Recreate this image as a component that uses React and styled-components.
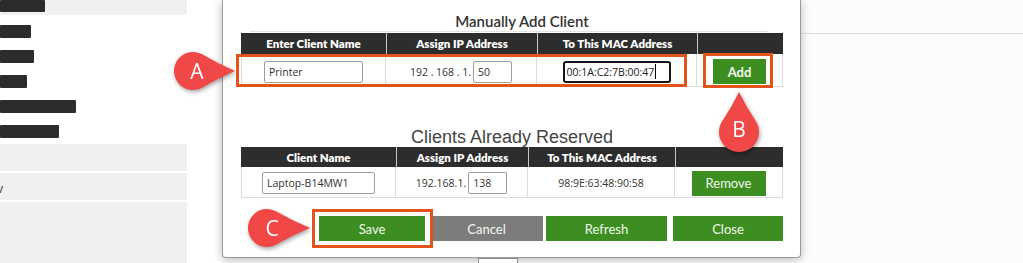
import React from "react";
import styled, { createGlobalStyle } from "styled-components";

const Global = createGlobalStyle`
  html, body { margin: 0; padding: 0; background: #fff; }
  body { font-family: "Open Sans", sans-serif; color: #333; }
`;

const Stage = styled.div`
  position: relative;
  width: 1023px;
  height: 263px;
  overflow: hidden;
  display: flex;
  background: #fff;
`;

/* ---------- sidebar ---------- */
const Sidebar = styled.aside`
  width: 187px;
  flex: none;
  display: flex;
  flex-direction: column;
`;
const SideTop = styled.div`
  height: 15px;
  background: #f0f0f0;
`;
const Redact = styled.div`
  width: ${(p) => p.$w}px;
  height: ${(p) => p.$h || 13}px;
  background: #2c2c2c;
  border-radius: 1px;
`;
const SideList = styled.div`
  display: flex;
  flex-direction: column;
  gap: 12px;
  padding: 10px 0 6px;
`;
const SideRows = styled.div`
  flex: 1;
  display: flex;
  flex-direction: column;
  gap: 2px;
`;
const SideRow = styled.div`
  height: ${(p) => (p.$h ? `${p.$h}px` : "auto")};
  flex: ${(p) => (p.$h ? "none" : 1)};
  background: #f0f0f0;
  display: flex;
  align-items: center;
  font-family: "Open Sans", sans-serif;
  font-size: 12px;
  color: #333;
  overflow: hidden;
`;
const CutText = styled.span`
  margin-left: -3px;
  margin-top: 3px;
`;

const Gutter = styled.div`
  width: 35px;
  flex: none;
`;

/* ---------- modal ---------- */
const ModalCol = styled.div`
  width: 579px;
  flex: none;
  display: flex;
  flex-direction: column;
  position: relative;
  z-index: 1;
`;
const Modal = styled.section`
  box-sizing: border-box;
  height: 258px;
  flex: none;
  background: #fff;
  border: 1px solid #9c9c9c;
  border-top: none;
  border-radius: 0 0 4px 4px;
  box-shadow: 0 2px 10px rgba(0, 0, 0, 0.28);
  padding: 0 17px 0 18px;
  display: flex;
  flex-direction: column;
`;
const SectionTitle = styled.h2`
  margin: 0;
  padding: 12px 0 0 20px;
  height: 30px;
  box-sizing: border-box;
  line-height: 18px;
  text-align: center;
  font-family: Lato, sans-serif;
  font-weight: 600;
  font-size: 15px;
  color: #333;
`;
const Rule = styled.div`
  height: 1px;
  background: #e4e4e4;
  margin: 1px 15px 1px 9px;
`;
const BigTitle = styled.h2`
  margin: 40px 0 0;
  height: 20px;
  line-height: 20px;
  text-align: center;
  font-family: "Liberation Sans", Arial, sans-serif;
  font-weight: 400;
  font-size: 18px;
  color: #444;
`;
const Grid = styled.div`
  display: grid;
  grid-template-columns: ${(p) => p.$cols};
`;
const Head = styled.div`
  height: ${(p) => p.$h}px;
  background: #2d2d2d;
  color: #fff;
  font-family: Lato, sans-serif;
  font-weight: 800;
  font-size: 11.5px;
  display: flex;
  align-items: center;
  justify-content: center;
  & + & {
    border-left: 1px solid #c9c9c9;
  }
`;
const Cell = styled.div`
  box-sizing: border-box;
  height: ${(p) => p.$h}px;
  padding-top: ${(p) => p.$pt}px;
  border-bottom: 1px solid #dcdcdc;
  border-right: 1px solid #dcdcdc;
  border-left: ${(p) => (p.$first ? "1px solid #dcdcdc" : "none")};
  display: flex;
  align-items: center;
  justify-content: center;
  gap: 2px;
  font-family: "Open Sans", sans-serif;
  font-size: 10.5px;
  color: #333;
`;
const Field = styled.div`
  box-sizing: border-box;
  width: ${(p) => p.$w}px;
  height: 22px;
  border: ${(p) => (p.$focus ? "2px solid #151515" : "1px solid #9d9d9d")};
  border-radius: ${(p) => (p.$focus ? 3 : 2)}px;
  padding: 0 ${(p) => (p.$focus ? 2 : 4)}px;
  display: flex;
  align-items: center;
  font-family: "Open Sans", sans-serif;
  font-size: 10.5px;
  color: ${(p) => (p.$focus ? "#1a1a1a" : "#333")};
  background: #fff;
  white-space: nowrap;
`;
const Caret = styled.span`
  display: inline-block;
  width: 1px;
  height: 15px;
  background: #000;
  margin-left: 1px;
`;
const Btn = styled.button`
  box-sizing: border-box;
  width: ${(p) => p.$w}px;
  height: 25px;
  border: none;
  padding: 0;
  margin: 0;
  background: ${(p) => (p.$gray ? "#7c7c7c" : "#3d8e20")};
  color: #f4f8f2;
  font-family: Lato, sans-serif;
  font-size: 13px;
  font-weight: ${(p) => (p.$bold ? 700 : 400)};
  cursor: pointer;
`;
const ButtonRow = styled.div`
  margin-top: 18px;
  display: flex;
  justify-content: flex-end;
`;
const Spaced = styled.div`
  margin-left: ${(p) => p.$ml}px;
  display: flex;
`;
const Below = styled.div`
  flex: 1;
  display: flex;
  padding-left: 256px;
`;
const Tab = styled.div`
  width: 38px;
  height: 12px;
  border: 1px solid #8a8a8a;
  border-bottom: none;
  background: #fff;
`;

/* ---------- right pane ---------- */
const RightPane = styled.div`
  flex: 1;
  background: #fcfcfc;
`;
const RightBand = styled.div`
  height: 33px;
  border-bottom: 1px solid #e1e1e1;
`;

/* ---------- overlays ---------- */
const Highlight = styled.div`
  position: absolute;
  left: ${(p) => p.$x}px;
  top: ${(p) => p.$y}px;
  width: ${(p) => p.$w}px;
  height: ${(p) => p.$h}px;
  box-sizing: border-box;
  border: 3px solid #e2541b;
  z-index: 5;
  pointer-events: none;
`;
const CalloutSvg = styled.svg`
  position: absolute;
  left: ${(p) => p.$cx - 50}px;
  top: ${(p) => p.$cy - 50}px;
  width: 100px;
  height: 100px;
  overflow: visible;
  z-index: 6;
  filter: drop-shadow(1px 2px 2px rgba(0, 0, 0, 0.35));
`;

function Callout({ cx, cy, r, d, dir, letter, shift }) {
  const th = Math.acos(r / d);
  const c = 50;
  const tx = c + r * Math.cos(th);
  const ty1 = c - r * Math.sin(th);
  const ty2 = c + r * Math.sin(th);
  const tip = c + d;
  const qx = (tx + tip) / 2;
  const path = `M ${tip} ${c} Q ${qx} ${c - r * Math.sin(th) * 0.42} ${tx} ${ty1} A ${r} ${r} 0 1 0 ${tx} ${ty2} Q ${qx} ${c + r * Math.sin(th) * 0.42} ${tip} ${c} Z`;
  const rot = dir === "up" ? -90 : 0;
  const lx = dir === "up" ? c : c + shift;
  const ly = dir === "up" ? c - shift : c;
  return (
    <CalloutSvg $cx={cx} $cy={cy} viewBox="0 0 100 100">
      <path d={path} fill="#f04747" transform={`rotate(${rot} 50 50)`} />
      <text
        x={lx}
        y={ly + 7.5}
        textAnchor="middle"
        fill="#fff"
        fontFamily="'Open Sans', sans-serif"
        fontSize="21"
      >
        {letter}
      </text>
    </CalloutSvg>
  );
}

export default function App() {
  return (
    <>
      <Global />
      <Stage>
        <Sidebar>
          <SideTop>
            <Redact $w={45} $h={12} />
          </SideTop>
          <SideList>
            <Redact $w={31} />
            <Redact $w={34} />
            <Redact $w={27} />
            <Redact $w={76} />
            <Redact $w={59} />
          </SideList>
          <SideRows>
            <SideRow $h={27} />
            <SideRow $h={27}>
              <CutText>v</CutText>
            </SideRow>
            <SideRow />
          </SideRows>
        </Sidebar>
        <Gutter />
        <ModalCol>
          <Modal>
            <SectionTitle>Manually Add Client</SectionTitle>
            <Rule />
            <Grid $cols="145px 151px 160px 1fr">
              <Head $h={21}>Enter Client Name</Head>
              <Head $h={21}>Assign IP Address</Head>
              <Head $h={21}>To This MAC Address</Head>
              <Head $h={21} />
              <Cell $h={33} $pt={3} $first>
                <Field $w={99}>Printer</Field>
              </Cell>
              <Cell $h={33} $pt={3}>
                <span>192 . 168 . 1.</span>
                <Field $w={39}>50</Field>
              </Cell>
              <Cell $h={33} $pt={3}>
                <Field $w={108} $focus>
                  00:1A:C2:7B:00:47
                  <Caret />
                </Field>
              </Cell>
              <Cell $h={33} $pt={3}>
                <Btn $w={53} $bold>
                  Add
                </Btn>
              </Cell>
            </Grid>
            <BigTitle>Clients Already Reserved</BigTitle>
            <Grid $cols="155px 132px 147px 1fr">
              <Head $h={20}>Client Name</Head>
              <Head $h={20}>Assign IP Address</Head>
              <Head $h={20}>To This MAC Address</Head>
              <Head $h={20} />
              <Cell $h={31} $pt={2} $first>
                <Field $w={113}>Laptop-B14MW1</Field>
              </Cell>
              <Cell $h={31} $pt={2}>
                <span>192.168.1.</span>
                <Field $w={39}>138</Field>
              </Cell>
              <Cell $h={31} $pt={2}>98:9E:63:48:90:58</Cell>
              <Cell $h={31} $pt={2}>
                <Btn $w={74}>Remove</Btn>
              </Cell>
            </Grid>
            <ButtonRow>
              <Btn $w={106}>Save</Btn>
              <Spaced $ml={5}>
                <Btn $w={113} $gray>
                  Cancel
                </Btn>
              </Spaced>
              <Spaced $ml={3}>
                <Btn $w={121}>Refresh</Btn>
              </Spaced>
              <Spaced $ml={6}>
                <Btn $w={110}>Close</Btn>
              </Spaced>
            </ButtonRow>
          </Modal>
          <Below>
            <Tab />
          </Below>
        </ModalCol>
        <RightPane>
          <RightBand />
        </RightPane>

        <Highlight $x={236} $y={54} $w={451} $h={33} />
        <Highlight $x={703} $y={53} $w={70} $h={35} />
        <Highlight $x={312} $y={209} $w={121} $h={39} />

        <Callout cx={193} cy={71} r={19} d={42} dir="right" letter="A" shift={4} />
        <Callout cx={738.5} cy={132} r={20} d={40} dir="up" letter="B" shift={3} />
        <Callout cx={267} cy={228} r={19} d={43} dir="right" letter="C" shift={5} />
      </Stage>
    </>
  );
}
